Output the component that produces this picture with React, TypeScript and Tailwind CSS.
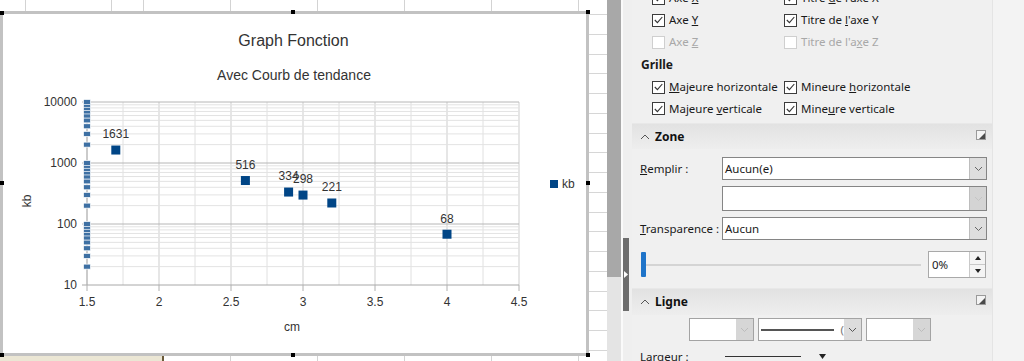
import React from "react"

const xs = (v: number) => 87 + (v - 1.5) * 144
const ys = (v: number) => 285 - Math.log10(v / 10) * 61

const points = [
  { x: 1.7, y: 1631 },
  { x: 2.6, y: 516 },
  { x: 2.9, y: 334 },
  { x: 3.0, y: 298 },
  { x: 3.2, y: 221 },
  { x: 4.0, y: 68 },
]

const minorY: number[] = []
for (const d of [10, 100, 1000]) for (let k = 2; k <= 9; k++) minorY.push(d * k)
const axisMarks: number[] = []
for (const d of [10, 100, 1000]) for (let k = d === 10 ? 2 : 1; k <= 9; k++) axisMarks.push(d * k)
axisMarks.push(10000)

const font = { fontFamily: '"Liberation Sans", Arial, sans-serif' }
const uiFont = { fontFamily: '"Noto Sans", "Open Sans", sans-serif' }

function Chart() {
  const vlines = Array.from({ length: 13 }, (_, i) => 1.5 + i * 0.25)
  return (
    <svg width={583} height={339} viewBox="3 14 583 339" style={font} className="block">
      {vlines.map((v, i) => (
        <line key={i} x1={xs(v)} x2={xs(v)} y1={102} y2={285} stroke={i % 2 ? "#e0e0e0" : "#cdcdcd"} />
      ))}
      {minorY.map((v) => (
        <line key={v} x1={87} x2={519} y1={ys(v)} y2={ys(v)} stroke="#e3e3e3" />
      ))}
      {[100, 1000, 10000].map((v) => (
        <line key={v} x1={82} x2={519} y1={ys(v)} y2={ys(v)} stroke="#b6b6b6" />
      ))}
      <line x1={82} x2={519} y1={285} y2={285} stroke="#a8a8a8" />
      <line x1={87} x2={87} y1={102} y2={291} stroke="#b0b0b0" />
      {[2, 2.5, 3, 3.5, 4, 4.5].map((v) => (
        <line key={v} x1={xs(v)} x2={xs(v)} y1={285} y2={291} stroke="#b0b0b0" />
      ))}
      {axisMarks.map((v) => (
        <rect key={v} x={83.5} y={ys(v) - 2.5} width={7} height={5} fill="#3e70a3" stroke="#ffffff" strokeWidth={0.7} />
      ))}
      <text x={293.5} y={46} textAnchor="middle" fontSize={16} fill="#333">Graph Fonction</text>
      <text x={294} y={80} textAnchor="middle" fontSize={14} fill="#333">Avec Courb de tendance</text>
      {[
        [10000, "10000"],
        [1000, "1000"],
        [100, "100"],
        [10, "10"],
      ].map(([v, t]) => (
        <text key={t as string} x={77} y={ys(v as number) + 4.3} textAnchor="end" fontSize={12} fill="#333">
          {t}
        </text>
      ))}
      {[1.5, 2, 2.5, 3, 3.5, 4, 4.5].map((v) => (
        <text key={v} x={xs(v)} y={305.5} textAnchor="middle" fontSize={12} fill="#333">
          {String(v)}
        </text>
      ))}
      {points.map((p) => (
        <g key={p.y}>
          <rect x={xs(p.x) - 4.5} y={ys(p.y) - 4.5} width={9} height={9} fill="#004586" />
          <text x={xs(p.x)} y={ys(p.y) - 11.7} textAnchor="middle" fontSize={12} fill="#333">
            {p.y}
          </text>
        </g>
      ))}
      <rect x={550} y={180} width={8} height={8} fill="#004586" />
      <text x={562} y={188.3} fontSize={12} fill="#333">kb</text>
      <text x={292} y={331} textAnchor="middle" fontSize={12} fill="#333">cm</text>
      <text transform="translate(31 201) rotate(-90)" textAnchor="middle" fontSize={12} fill="#333">kb</text>
    </svg>
  )
}

function Handle({ className }: { className: string }) {
  return <div className={`absolute w-[4px] h-[4px] bg-black ${className}`} />
}

function Sheet() {
  return (
    <div className="w-[607px] h-full flex flex-col bg-white">
      <div className="flex h-[11px] shrink-0">
        {[26, 86, 32, 87, 87, 87, 87, 87].map((w, i) => (
          <div key={i} style={{ width: w }} className="h-full border-r border-[#d3d3d3] shrink-0" />
        ))}
      </div>
      <div className="flex h-[345px] shrink-0">
        <div className="relative w-[589px] h-[345px] border-[3px] border-[#c2c2c2] bg-white shrink-0">
          <Chart />
          <Handle className="left-[-3px] top-[-3px]" />
          <Handle className="left-[288px] top-[-4px]" />
          <Handle className="left-[583px] top-[-4px]" />
          <Handle className="left-[583px] top-[167px]" />
          <Handle className="left-[583px] top-[339px]" />
          <Handle className="left-[288px] top-[339px]" />
          <Handle className="left-[-3px] top-[339px]" />
          <Handle className="left-[-3px] top-[167px]" />
        </div>
        <div className="flex-1 flex flex-col overflow-hidden">
          <div className="h-[4px] border-b border-[#d6d6d6] shrink-0" />
          {Array.from({ length: 18 }, (_, i) => (
            <div key={i} className="h-[19.78px] border-b border-[#d6d6d6] shrink-0" />
          ))}
        </div>
      </div>
      <div className="flex flex-1">
        <div className="w-[162px] h-full bg-[#ebe6d4]" />
        <div className="w-[2px] h-full bg-[#6b5a3a]" />
        {[67, 87, 87, 87, 87].map((w, i) => (
          <div key={i} style={{ width: w }} className="h-full border-r border-[#d3d3d3] shrink-0" />
        ))}
      </div>
    </div>
  )
}

function Side() {
  return (
    <div className="flex h-full shrink-0">
      <div className="w-[14px] h-full flex flex-col">
        <div className="h-[277px] bg-[#a8a8a8]" />
        <div className="flex-1 bg-[#e4e4e4]" />
      </div>
      <div className="w-[11px] h-full bg-[#efefef] flex flex-col border-l-2 border-[#fafafa]">
        <div className="h-[238px]" />
        <div className="w-[6px] h-[73px] bg-[#6d6d6d] flex items-center justify-center">
          <svg width="4" height="7" viewBox="0 0 4 7">
            <path d="M0 0 L4 3.5 L0 7 Z" fill="#ffffff" />
          </svg>
        </div>
      </div>
    </div>
  )
}

function Box({ checked = true, disabled = false }: { checked?: boolean; disabled?: boolean }) {
  return (
    <div
      className={`w-[13px] h-[13px] border bg-white shrink-0 flex items-center justify-center ${
        disabled ? "border-[#cfcfcf]" : "border-[#3c3c3c]"
      }`}
    >
      {checked && (
        <svg width="9" height="8" viewBox="0 0 9 8">
          <path d="M0.8 4 L3.4 6.6 L8.3 1" fill="none" stroke="#333" strokeWidth="1.1" />
        </svg>
      )}
    </div>
  )
}

function Check({ children, disabled = false, checked = true, w }: { children: React.ReactNode; disabled?: boolean; checked?: boolean; w?: string }) {
  return (
    <div className={`flex items-center gap-[4px] ${w ?? ""} ${disabled ? "text-[#a8a8a8]" : ""}`}>
      <Box checked={checked} disabled={disabled} />
      <span className="whitespace-nowrap">{children}</span>
    </div>
  )
}

function Chevron({ color = "#666" }: { color?: string }) {
  return (
    <svg width="9" height="6" viewBox="0 0 9 6">
      <path d="M1 1 L4.5 4.5 L8 1" fill="none" stroke={color} strokeWidth="1" />
    </svg>
  )
}

function Select({ value, h, disabled = false }: { value?: string; h: string; disabled?: boolean }) {
  return (
    <div className={`flex ${h} w-[265px] border border-[#858585] bg-white`}>
      <div className="flex-1 flex items-center pl-[2px]">{value}</div>
      <div className={`w-[17px] flex items-center justify-center border-l border-[#bdbdbd] ${disabled ? "bg-[#d4d4d4]" : "bg-[#dedede]"}`}>
        <Chevron color={disabled ? "#c4c4c4" : "#666"} />
      </div>
    </div>
  )
}

function MoreIcon() {
  return (
    <svg width="10" height="10" viewBox="0 0 10 10">
      <rect x="0.5" y="0.5" width="9" height="9" fill="#f4f4f4" stroke="#9a9a9a" />
      <path d="M9 3 L9 9 L3 9 Z" fill="#4a4a4a" />
    </svg>
  )
}

function Header({ title, h }: { title: string; h: string }) {
  return (
    <div className={`flex items-center ${h} px-[8px] bg-gradient-to-b from-[#e2e2e2] to-[#eeeeee] border-t border-[#e8e8e8]`}>
      <svg width="10" height="6" viewBox="0 0 10 6" className="mr-[5px]">
        <path d="M1 5 L5 1 L9 5" fill="none" stroke="#555" strokeWidth="1" />
      </svg>
      <span className="font-bold text-[12px] text-[#111]">{title}</span>
      <div className="flex-1" />
      <div className="mr-[-2px] mt-[-4px]">
        <MoreIcon />
      </div>
    </div>
  )
}

function Dd({ w, children, dark = false }: { w: string; children?: React.ReactNode; dark?: boolean }) {
  return (
    <div className={`flex h-[23px] ${w} border border-[#a3a3a3] bg-white`}>
      <div className="flex-1 flex items-center overflow-hidden">{children}</div>
      <div className={`w-[17px] flex items-center justify-center ${dark ? "bg-[#dcdcdc]" : "bg-[#d6d6d6]"}`}>
        <Chevron color={dark ? "#555" : "#bcbcbc"} />
      </div>
    </div>
  )
}

function Panel() {
  return (
    <div className="flex-1 flex h-full bg-[#f1f1f1] text-[11.5px] text-[#1a1a1a] overflow-hidden" style={uiFont}>
      <div className="w-[360px] flex flex-col shrink-0 bg-[#f0f0f0]">
        <div className="mt-[-13px] flex flex-col pl-[20px]">
          <div className="flex h-[22px] items-center">
            <Check w="w-[132px]">Axe <u>X</u></Check>
            <Check>Titre <u>d</u>e l'axe X</Check>
          </div>
          <div className="flex h-[22px] items-center">
            <Check w="w-[132px]">Axe <u>Y</u></Check>
            <Check>Titre de <u>l</u>'axe Y</Check>
          </div>
          <div className="flex h-[22px] items-center">
            <Check w="w-[132px]" disabled checked={false}>Axe <u>Z</u></Check>
            <Check disabled checked={false}>Titre de l'a<u>x</u>e Z</Check>
          </div>
        </div>
        <div className="h-[24px] flex items-center pl-[9px] pt-[3px] font-bold text-[12px]">Grille</div>
        <div className="flex flex-col pl-[20px] mt-[2px]">
          <div className="flex h-[22px] items-center">
            <Check w="w-[132px]"><u>M</u>ajeure horizontale</Check>
            <Check>Mineure <u>h</u>orizontale</Check>
          </div>
          <div className="flex h-[21px] items-center">
            <Check w="w-[132px]">Majeure <u>v</u>erticale</Check>
            <Check>Mine<u>u</u>re verticale</Check>
          </div>
        </div>
        <div className="mt-[4px]">
          <Header title="Zone" h="h-[26px]" />
        </div>
        <div className="flex flex-col pl-[8px] pr-[5px] mt-[8px] gap-[6px]">
          <div className="flex items-center">
            <span className="w-[82px]"><u>R</u>emplir :</span>
            <Select value="Aucun(e)" h="h-[23px]" />
          </div>
          <div className="flex items-center">
            <span className="w-[82px]" />
            <Select h="h-[25px]" disabled />
          </div>
          <div className="flex items-center">
            <span className="w-[82px]"><u>T</u>ransparence :</span>
            <Select value="Aucun" h="h-[23px]" />
          </div>
        </div>
        <div className="flex items-center h-[27px] mt-[11px] pl-[9px] pr-[6px]">
          <div className="w-[5px] h-[25px] bg-[#1f74c9] rounded-[1px]" />
          <div className="w-[275px] h-[2px] bg-[#d4d4d4]" />
          <div className="flex-1" />
          <div className="flex w-[58px] h-[27px] border border-[#a9a9a9] bg-white">
            <div className="flex-1 flex items-center pl-[3px]">0%</div>
            <div className="w-[16px] flex flex-col border-l border-[#c9c9c9] bg-[#f4f4f4]">
              <div className="flex-1 flex items-center justify-center border-b border-[#c9c9c9]">
                <svg width="6" height="4" viewBox="0 0 6 4"><path d="M0 4 L3 0 L6 4 Z" fill="#222" /></svg>
              </div>
              <div className="flex-1 flex items-center justify-center">
                <svg width="6" height="4" viewBox="0 0 6 4"><path d="M0 0 L3 4 L6 0 Z" fill="#222" /></svg>
              </div>
            </div>
          </div>
        </div>
        <div className="mt-[10px]">
          <Header title="Ligne" h="h-[27px]" />
        </div>
        <div className="flex items-center mt-[3px] pl-[57px] gap-[4px]">
          <Dd w="w-[65px]" />
          <Dd w="w-[104px]" dark>
            <div className="w-[73px] h-[2px] bg-[#555] ml-[2px]" />
            <span className="ml-[7px] text-[#777]">(</span>
          </Dd>
          <Dd w="w-[65px]" />
        </div>
        <div className="flex items-center mt-[7px] pl-[8px] h-[20px]">
          <span className="w-[85px]">Largeur :</span>
          <div className="w-[76px] h-[1px] bg-[#333]" />
          <svg width="7" height="5" viewBox="0 0 7 5" className="ml-[18px]"><path d="M0 0 L3.5 5 L7 0 Z" fill="#222" /></svg>
        </div>
      </div>
      <div className="flex-1 border-l border-[#e4e4e4] bg-[#f3f3f3]" />
    </div>
  )
}

export default function App() {
  return (
    <div className="flex w-[1024px] h-[361px] overflow-hidden bg-white">
      <Sheet />
      <Side />
      <Panel />
    </div>
  )
}
